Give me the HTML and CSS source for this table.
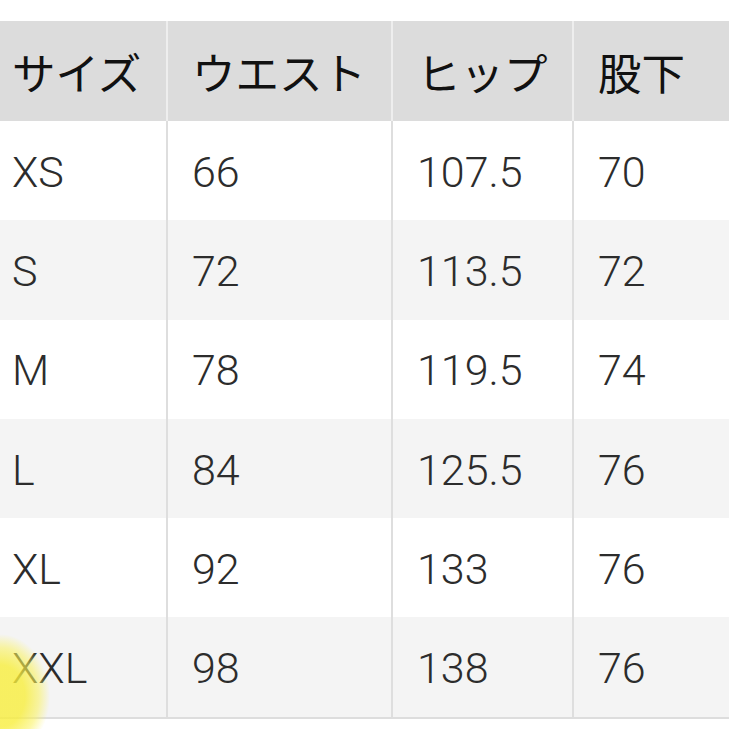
FILE: index.html
```html
<!DOCTYPE html>
<html lang="ja">
<head>
<meta charset="utf-8">
<link rel="stylesheet" href="styles.css">
</head>
<body>
<div class="page">
  <table class="size-table">
    <colgroup>
      <col class="c1"><col class="c2"><col class="c3"><col class="c4">
    </colgroup>
    <thead>
      <tr><th>サイズ</th><th>ウエスト</th><th>ヒップ</th><th>股下</th></tr>
    </thead>
    <tbody>
      <tr><td>XS</td><td>66</td><td>107.5</td><td>70</td></tr>
      <tr><td>S</td><td>72</td><td>113.5</td><td>72</td></tr>
      <tr><td>M</td><td>78</td><td>119.5</td><td>74</td></tr>
      <tr><td>L</td><td>84</td><td>125.5</td><td>76</td></tr>
      <tr><td>XL</td><td>92</td><td>133</td><td>76</td></tr>
      <tr><td>XXL</td><td>98</td><td>138</td><td>76</td></tr>
    </tbody>
  </table>
  <div class="glow"></div>
</div>
</body>
</html>
```
FILE: styles.css
```css
html, body {
  margin: 0;
  padding: 0;
  background: #ffffff;
}
.page {
  position: relative;
  width: 729px;
  height: 729px;
  overflow: hidden;
  padding-top: 21px;
  box-sizing: border-box;
}
.size-table {
  width: 740px;
  table-layout: fixed;
  border-collapse: separate;
  border-spacing: 0;
  border-bottom: 2px solid #dddddd;
}
.c1 { width: 168px; }
.c2 { width: 225px; }
.c3 { width: 181px; }
.c4 { width: 166px; }
.size-table th,
.size-table td {
  text-align: left;
  vertical-align: middle;
  padding: 0 0 0 24px;
  border-right: 2px solid #dedede;
  white-space: nowrap;
  line-height: 1;
}
.size-table th:first-child,
.size-table td:first-child {
  padding-left: 12px;
}
.size-table th:last-child,
.size-table td:last-child {
  border-right: none;
}
.size-table th {
  height: 98px;
  background: #dcdcdc;
  border-right-color: #eeeeee;
  font-family: "Noto Sans CJK JP", "Noto Sans", sans-serif;
  font-weight: 400;
  font-size: 43.5px;
  color: #111111;
  padding-top: 2px;
}
.size-table td {
  height: 96.3px;
  font-family: "Roboto Light", Roboto, "Liberation Sans", sans-serif;
  font-weight: 300;
  font-size: 43px;
  color: #2c2c2c;
  padding-top: 3px;
}
.size-table tbody tr:nth-child(odd) td { background: #ffffff; }
.size-table tbody tr:nth-child(even) td { background: #f4f4f4; }
.glow {
  position: absolute;
  left: -50px;
  top: 634px;
  width: 100px;
  height: 124px;
  border-radius: 50%;
  background: radial-gradient(closest-side, rgba(248, 238, 60, 0.8) 50%, rgba(250, 242, 90, 0.55) 78%, rgba(255, 250, 130, 0) 100%);
  pointer-events: none;
}
```
